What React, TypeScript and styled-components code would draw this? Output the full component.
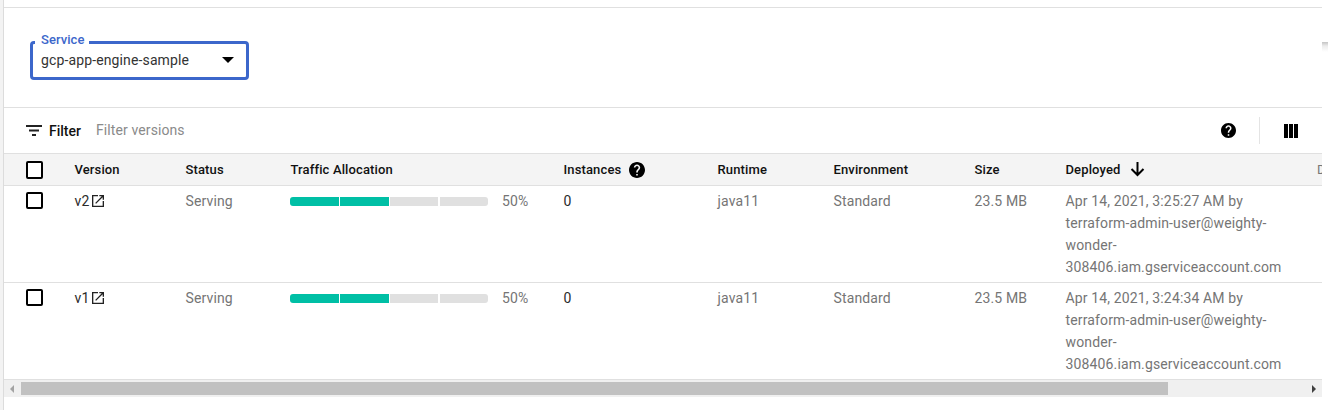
import React from 'react';
import styled, { createGlobalStyle } from 'styled-components';

const GlobalStyle = createGlobalStyle`
  * { box-sizing: border-box; }
  body { margin: 0; background: #fff; font-family: Roboto, sans-serif; overflow: hidden; }
`;

const Page = styled.div`
  display: flex;
  height: 410px;
  width: 1328px;
`;
const Gutter = styled.div`
  width: 4px;
  background: #f3f3f3;
  border-right: 1px solid #dcdcdc;
`;
const Main = styled.main`
  width: 1318px;
  padding-top: 7px;
  overflow: hidden;
`;
const Edge = styled.div`
  width: 6px;
  height: 10px;
  margin-top: 42px;
  background: linear-gradient(#c4c4c4, #ececec 40%, #fff);
`;
const ServiceBar = styled.section`
  height: 101px;
  border-top: 1px solid #e0e0e0;
  border-bottom: 1px solid #e0e0e0;
  padding: 33px 0 0 26px;
`;
const Select = styled.div`
  position: relative;
  display: flex;
  align-items: center;
  justify-content: space-between;
  width: 219px;
  height: 39px;
  border: 3px solid #3c67cb;
  border-radius: 4px;
  padding: 0 12px 2px 8px;
  font-size: 14px;
  letter-spacing: 0.13px;
  color: #333;
`;
const SelectLabel = styled.span`
  position: absolute;
  left: 2px;
  top: -12px;
  padding: 0 5px 0 6px;
  background: #fff;
  color: #3c67cb;
  font-size: 13px;
  font-weight: 500;
  line-height: 16px;
  letter-spacing: 0.05px;
`;
const FilterBar = styled.div`
  display: flex;
  align-items: center;
  height: 45px;
  padding: 0 24px 0 22px;
`;
const FilterTitle = styled.span`
  margin-left: 7px;
  padding-top: 1px;
  width: 47px;
  font-size: 14px;
  font-weight: 500;
  color: #111;
`;
const FilterHint = styled.span`
  flex: 1;
  padding-bottom: 2px;
  font-size: 14px;
  letter-spacing: 0.1px;
  color: #8a8a8a;
`;
const Divider = styled.div`
  width: 1px;
  height: 27px;
  background: #e4e4e4;
  margin: 0 24px 0 23px;
`;
const Row = styled.div<{ $head?: boolean }>`
  display: grid;
  grid-template-columns: 70px 111px 105px 273px 154px 116px 141px 91px 252px 60px;
  width: 1373px;
  height: ${p => (p.$head ? 33 : 97)}px;
  border-bottom: 1px solid #e0e0e0;
  ${p => p.$head && 'border-top: 1px solid #e0e0e0; background: #f4f4f4;'}
`;
const HeadCell = styled.div<{ $muted?: boolean }>`
  display: flex;
  align-items: center;
  padding-left: ${p => (p.$muted ? 0 : 0.5)}px;
  font-size: 13px;
  font-weight: ${p => (p.$muted ? 400 : 500)};
  letter-spacing: 0.13px;
  color: ${p => (p.$muted ? '#777' : '#111')};
  svg { margin-left: 8px; }
`;
const Cell = styled.div<{ $dark?: boolean }>`
  padding: 4px 0 0 0.5px;
  font-size: 14px;
  line-height: 22px;
  letter-spacing: 0.14px;
  color: ${p => (p.$dark ? '#2b2b2b' : '#757575')};
`;
const Inline = styled.div`
  display: flex;
  align-items: center;
`;
const Name = styled.span`
  width: 17.5px;
`;
const Checkbox = styled.div<{ $tall?: boolean }>`
  width: 17px;
  height: ${p => (p.$tall ? 18 : 17)}px;
  border: 2px solid #000;
  border-radius: 2px;
  margin: ${p => (p.$tall ? 7 : 6)}px 0 0 22px;
  background: #fff;
`;
const Meter = styled.div`
  display: grid;
  grid-template-columns: 49px 49px 48px 48px;
  column-gap: 1px;
  width: 198px;
  height: 9px;
  margin: 0 14px 0 -0.5px;
  border-radius: 3px;
  overflow: hidden;
`;
const Segment = styled.div<{ $on: boolean; $gap?: boolean }>`
  background: ${p => (p.$on ? '#00bfa5' : '#e0e0e0')};
  margin-left: ${p => (p.$gap ? 1 : 0)}px;
  margin-right: ${p => (p.$gap ? -1 : 0)}px;
`;
const Scrollbar = styled.div`
  display: flex;
  align-items: center;
  height: 17px;
  background: #f0f0f0;
  padding: 0 6px;
`;
const Thumb = styled.div`
  width: 1147px;
  height: 13px;
  margin: 0 auto 0 7px;
  background: #c1c1c1;
`;

const Help = ({ size }: { size: number }) => (
  <svg width={size} height={size} viewBox="2 2 20 20">
    <path d="M12 2C6.48 2 2 6.48 2 12s4.48 10 10 10 10-4.48 10-10S17.52 2 12 2zm1 17h-2v-2h2v2zm2.07-7.75l-.9.92C13.45 12.9 13 13.5 13 15h-2v-.5c0-1.1.45-2.1 1.17-2.83l1.24-1.26c.37-.36.59-.86.59-1.41 0-1.1-.9-2-2-2s-2 .9-2 2H8c0-2.21 1.79-4 4-4s4 1.79 4 4c0 .88-.36 1.68-.93 2.25z" />
  </svg>
);
const OpenIcon = () => (
  <svg width="12" height="12" viewBox="3 3 18 18" fill="#222">
    <path d="M19 19H5V5h7V3H3v18h18v-9h-2v7zM14 3v2h3.59l-9.83 9.83 1.41 1.41L19 6.41V10h2V3h-7z" />
  </svg>
);

const versions = [
  { name: 'v2', time: 'Apr 14, 2021, 3:25:27 AM by' },
  { name: 'v1', time: 'Apr 14, 2021, 3:24:34 AM by' },
];

export default function App() {
  return (
    <Page>
      <GlobalStyle />
      <Gutter />
      <Main>
        <ServiceBar>
          <Select>
            <SelectLabel>Service</SelectLabel>
            gcp-app-engine-sample
            <svg width="12" height="6" viewBox="0 0 12 6"><path d="M0 0h12L6 6z" /></svg>
          </Select>
        </ServiceBar>
        <FilterBar>
          <svg width="16" height="11" viewBox="0 0 16 11" fill="#222">
            <path d="M0 0h16v2H0zM3 4.5h10v2H3zM6 9h4v2H6z" />
          </svg>
          <FilterTitle>Filter</FilterTitle>
          <FilterHint>Filter versions</FilterHint>
          <Help size={15} />
          <Divider />
          <svg width="14" height="14" viewBox="0 0 14 14">
            <path d="M0 0h4v14H0zM5 0h4v14H5zM10 0h4v14h-4z" />
          </svg>
        </FilterBar>
        <Row $head>
          <Checkbox $tall />
          <HeadCell>Version</HeadCell>
          <HeadCell>Status</HeadCell>
          <HeadCell>Traffic Allocation</HeadCell>
          <HeadCell>Instances<Help size={16} /></HeadCell>
          <HeadCell>Runtime</HeadCell>
          <HeadCell>Environment</HeadCell>
          <HeadCell>Size</HeadCell>
          <HeadCell>
            Deployed
            <svg width="20" height="18" viewBox="0 0 20 18" fill="none" stroke="#000" strokeWidth="2">
              <path d="M9.5 1v13M3.5 8l6 6 6-6" />
            </svg>
          </HeadCell>
          <HeadCell $muted>Diagnose</HeadCell>
        </Row>
        {versions.map(v => (
          <Row key={v.name}>
            <Checkbox />
            <Cell $dark><Inline><Name>{v.name}</Name><OpenIcon /></Inline></Cell>
            <Cell>Serving</Cell>
            <Cell>
              <Inline>
                <Meter>
                  <Segment $on />
                  <Segment $on />
                  <Segment $on={false} />
                  <Segment $on={false} $gap />
                </Meter>
                50%
              </Inline>
            </Cell>
            <Cell $dark>0</Cell>
            <Cell>java11</Cell>
            <Cell>Standard</Cell>
            <Cell>23.5 MB</Cell>
            <Cell>
              {v.time}<br />terraform-admin-user@weighty-<br />wonder-<br />308406.iam.gserviceaccount.com
            </Cell>
          </Row>
        ))}
        <Scrollbar>
          <svg width="4" height="8" viewBox="0 0 4 8" fill="#a3a3a3"><path d="M4 0v8L0 4z" /></svg>
          <Thumb />
          <svg width="4" height="8" viewBox="0 0 4 8" fill="#404040"><path d="M0 0v8l4-4z" /></svg>
        </Scrollbar>
      </Main>
      <Edge />
    </Page>
  );
}
